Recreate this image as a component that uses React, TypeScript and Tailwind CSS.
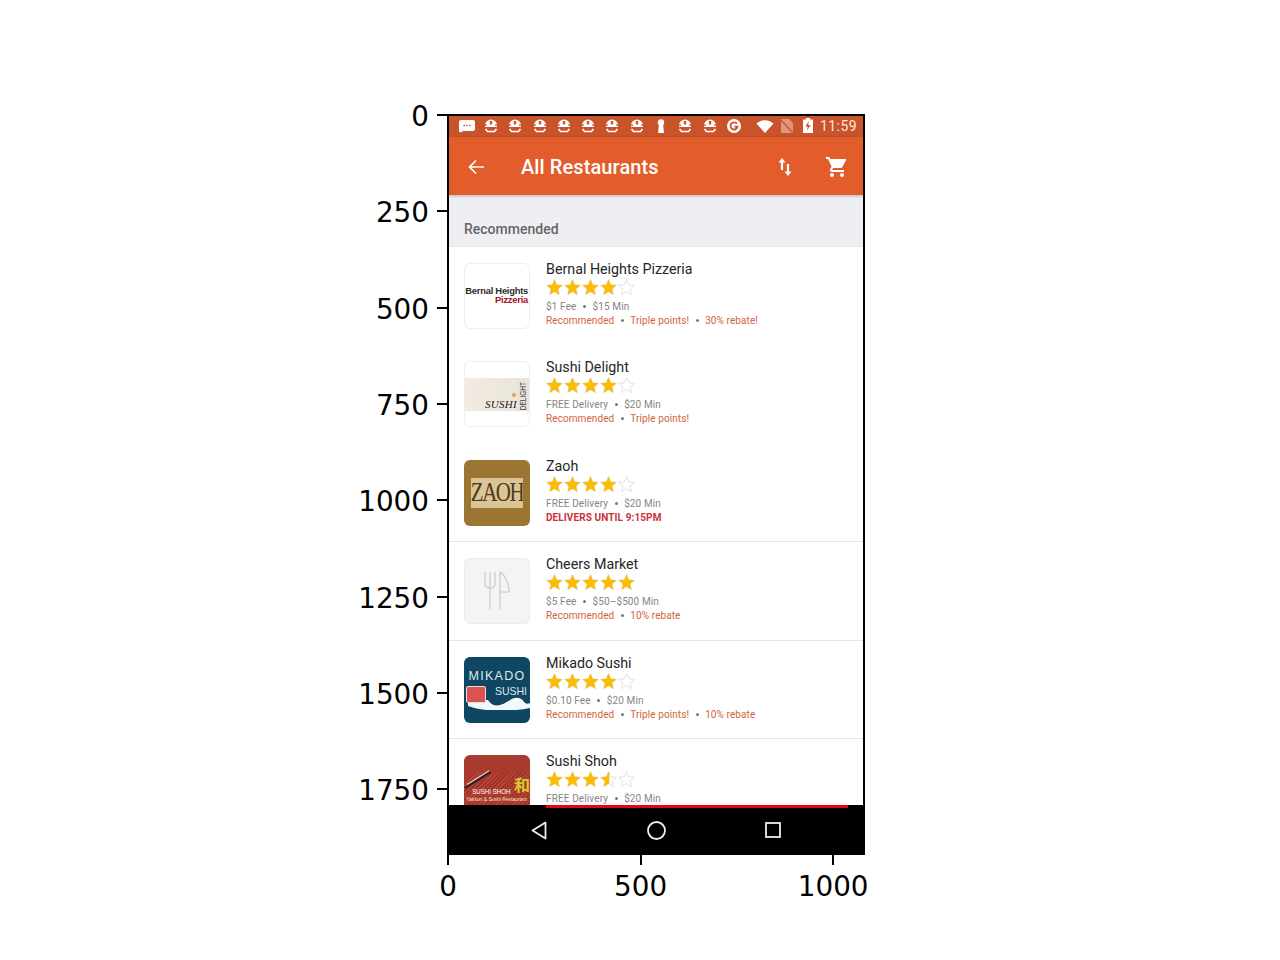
import type { ReactNode } from "react";

type Restaurant = {
  name: string;
  rating: number;
  info: string[];
  tags: string[];
  alert?: string;
  thumb: ReactNode;
  divider?: boolean;
};

const STAR = "M12 17.27L18.18 21l-1.64-7.03L22 9.24l-7.19-.61L12 2 9.19 8.63 2 9.24l5.46 4.73L5.82 21z";

function Star({ fill }: { fill: "full" | "half" | "none" }) {
  return (
    <svg width="19" height="19" viewBox="0 0 24 24" className="-mx-[0.5px] -mt-[1px] shrink-0">
      <path d={STAR} fill="none" stroke="#dcdcdc" strokeWidth="1.1" />
      {fill === "full" && <path d={STAR} fill="#fbbc05" />}
      {fill === "half" && <path d={STAR} fill="#fbbc05" style={{ clipPath: "inset(0 45% 0 0)" }} />}
    </svg>
  );
}

function Stars({ rating }: { rating: number }) {
  return (
    <div className="-ml-[0.5px] flex h-[18px]">
      {[1, 2, 3, 4, 5].map((n) => (
        <Star key={n} fill={rating >= n ? "full" : rating >= n - 0.5 ? "half" : "none"} />
      ))}
    </div>
  );
}

function BernalThumb() {
  return (
    <div className="flex h-full flex-col justify-center rounded-md border border-[#eeeeee] bg-white pr-[1px] pb-[2px] text-right font-['Liberation_Sans',sans-serif] text-[9.4px] leading-[9.5px] font-bold tracking-[-0.25px] whitespace-nowrap">
      <div className="text-[#2b2b2b]">Bernal Heights</div>
      <div className="text-[#a5121c]">Pizzeria</div>
    </div>
  );
}

function SushiDelightThumb() {
  return (
    <div className="flex h-full items-center overflow-hidden rounded-md border border-[#eeeeee] bg-white">
      <div className="relative flex h-[33px] w-full items-end justify-end bg-gradient-to-r from-[#f1ebe2] to-[#e9e4da]">
        <span className="mb-[1px] font-['Liberation_Serif',serif] text-[11px] leading-[12px] tracking-[0.3px] text-[#222222] italic">SUSHI</span>
        <span className="mb-[1px] ml-[2px] mr-[2px] scale-x-[1.5] rotate-180 font-['Liberation_Sans',sans-serif] text-[6.5px] leading-[8px] text-[#444444] [writing-mode:vertical-rl]">DELIGHT</span>
        <span className="absolute top-[15px] right-[13px] h-[4px] w-[4px] rounded-full bg-[#e8a04a]" />
      </div>
    </div>
  );
}

function ZaohThumb() {
  return (
    <div className="flex h-full items-center justify-center rounded-md bg-[#9b7633]">
      <div className="flex h-[30px] w-[52px] items-center justify-center overflow-hidden bg-[#d9c596] font-['Liberation_Serif',serif] text-[21px] leading-none tracking-[-1.5px] text-[#4f3a17]">
        <span className="scale-y-[1.25]">ZAOH</span>
      </div>
    </div>
  );
}

function CheersThumb() {
  return (
    <div className="flex h-full items-center justify-center rounded-md border border-[#ececec] bg-[#f4f4f4]">
      <svg width="26" height="38" viewBox="0 0 26 38" fill="none" stroke="#d4d4d4" strokeWidth="1.6" className="-mt-[2px]">
        <path d="M1 1v11c0 3 2 5 5 5s5-2 5-5V1M6 1v37" />
        <path d="M16 38V1c5 3 9 11 9 20h-9" />
      </svg>
    </div>
  );
}

function MikadoThumb() {
  return (
    <div className="relative flex h-full flex-col overflow-hidden rounded-md bg-[#0f4661] font-['Liberation_Sans',sans-serif] text-[#dbeaf0]">
      <svg width="66" height="24" viewBox="0 0 66 24" className="absolute bottom-[13px] left-0">
        <path d="M4 14H24C30 24 40 18 46 14C52 10 58 12 60 16C62 18 64 18 66 17V22C46 26 20 26 4 20z" fill="#f4f8fa" />
      </svg>
      <div className="relative mt-[12px] text-center text-[12.5px] leading-[14px] tracking-[1.3px]">MIKADO</div>
      <div className="relative mt-[2px] pr-[3px] text-right text-[10.5px] leading-[13px]">SUSHI</div>
      <div className="absolute top-[29px] left-[2px] h-[17px] w-[20px] rounded-[2px] border border-[#f2d9d6] bg-[#d9534f]" />
    </div>
  );
}

function ShohThumb() {
  return (
    <div className="relative flex h-full flex-col overflow-hidden rounded-t-md bg-[#a93a2e] font-['Liberation_Sans',sans-serif]">
      <div className="h-[17px] shrink-0" />
      <div className="h-[50px] bg-[repeating-linear-gradient(135deg,#b5483a_0px,#b5483a_1px,#a33528_1px,#a33528_3px)] pt-[15px]">
        <div className="origin-left scale-x-[0.82] pl-[10px] text-[7.5px] leading-[9px] text-white">SUSHI SHOH</div>
        <div className="pl-[2px] text-[5px] leading-[7px] text-[#f5e2c8]">Yakitori &amp; Sushi Restaurant</div>
      </div>
      <div className="absolute top-[32px] left-[1px] h-[2px] w-[30px] origin-left -rotate-[32deg] bg-[#222222]" />
      <div className="absolute top-[29px] left-[3px] h-[1px] w-[26px] origin-left -rotate-[32deg] bg-[#e5d5c5]" />
      <div className="absolute top-[20px] right-0 font-['Noto_Sans_CJK_JP',sans-serif] text-[16px] leading-[18px] font-bold text-[#d8c92e]">和</div>
    </div>
  );
}

const restaurants: Restaurant[] = [
  { name: "Bernal Heights Pizzeria", rating: 4, info: ["$1 Fee", "$15 Min"], tags: ["Recommended", "Triple points!", "30% rebate!"], thumb: <BernalThumb /> },
  { name: "Sushi Delight", rating: 4, info: ["FREE Delivery", "$20 Min"], tags: ["Recommended", "Triple points!"], thumb: <SushiDelightThumb /> },
  { name: "Zaoh", rating: 4, info: ["FREE Delivery", "$20 Min"], tags: [], alert: "DELIVERS UNTIL 9:15PM", thumb: <ZaohThumb />, divider: true },
  { name: "Cheers Market", rating: 5, info: ["$5 Fee", "$50–$500 Min"], tags: ["Recommended", "10% rebate"], thumb: <CheersThumb />, divider: true },
  { name: "Mikado Sushi", rating: 4, info: ["$0.10 Fee", "$20 Min"], tags: ["Recommended", "Triple points!", "10% rebate"], thumb: <MikadoThumb />, divider: true },
  { name: "Sushi Shoh", rating: 3.5, info: ["FREE Delivery", "$20 Min"], tags: [], thumb: <ShohThumb /> },
];

function Dotted({ items, className }: { items: string[]; className: string }) {
  return (
    <div className={`flex items-center whitespace-nowrap ${className}`}>
      {items.map((item, i) => (
        <span key={item} className="flex items-center">
          {i > 0 && <span className="mx-[6.5px] h-[3px] w-[3px] rounded-full bg-[#777777]" />}
          {item}
        </span>
      ))}
    </div>
  );
}

function Row({ r }: { r: Restaurant }) {
  return (
    <div className={`flex h-[98.4px] shrink-0 gap-4 px-[15px] pt-4 ${r.divider ? "border-b border-[#e6e6e6]" : ""}`}>
      <div className="h-[66px] w-[66px] shrink-0">{r.thumb}</div>
      <div className="flex min-w-0 flex-col">
        <div className="-mt-[2px] text-[14.25px] leading-[17px] text-[#262626]">{r.name}</div>
        <div className="mt-[1px]"><Stars rating={r.rating} /></div>
        <Dotted items={r.info} className="mt-[3px] h-[13px] text-[10px] tracking-[0.12px] text-[#858585]" />
        {r.alert ? (
          <div className="mt-[1px] text-[10px] leading-[13px] font-bold tracking-[0.1px] text-[#c8323c]">{r.alert}</div>
        ) : (
          <Dotted items={r.tags} className="mt-[1px] h-[13px] text-[10px] tracking-[0.09px] text-[#d1643c]" />
        )}
      </div>
    </div>
  );
}

function NotifIcon() {
  return (
    <svg width="16" height="16" viewBox="0 0 16 16" className="shrink-0">
      <path d="M8 1.500a6 6 0 0 1 6 6v1.500H2V7.500a6 6 0 0 1 6-6z" fill="#fff" />
      <rect x="6.800" y="3" width="2.400" height="3.500" fill="#c9532b" />
      <rect x="0" y="6.500" width="4" height="1.200" fill="#c9532b" />
      <rect x="12" y="6.500" width="4" height="1.200" fill="#c9532b" />
      <path d="M2.500 11l2 2.500h7l2-2.500" fill="none" stroke="#fff" strokeWidth="1.600" />
    </svg>
  );
}

function StatusBar() {
  return (
    <div className="flex h-[21px] shrink-0 items-center bg-[#c9532b] pr-[7px] pb-[2px] pl-[9px] text-white">
      <svg width="18" height="14" viewBox="0 0 18 14" className="mr-[7px] shrink-0">
        <path d="M3 1h12a2 2 0 0 1 2 2v7a2 2 0 0 1-2 2H5l-2 1.500A2 2 0 0 1 1 11V3a2 2 0 0 1 2-2z" fill="#fff" />
        <path d="M5.500 6.500h1.400M8.300 6.500h1.400M11.100 6.500h1.400" stroke="#c9532b" strokeWidth="1.400" />
      </svg>
      <div className="flex gap-[8.3px]">
        {[0, 1, 2, 3, 4, 5, 6].map((n) => <NotifIcon key={n} />)}
        <svg width="16" height="16" viewBox="0 0 16 16" className="shrink-0">
          <circle cx="8" cy="4.500" r="3.200" fill="#fff" />
          <path d="M6 6h4l1 9H5z" fill="#fff" />
        </svg>
        <NotifIcon />
        <NotifIcon />
        <svg width="16" height="16" viewBox="0 0 16 16" className="shrink-0">
          <circle cx="8" cy="8" r="7" fill="#fff" />
          <path d="M11 5.800A3.600 3.600 0 1 0 11.600 8.600H8.400" fill="none" stroke="#c9532b" strokeWidth="1.800" />
        </svg>
      </div>
      <svg width="18" height="14" viewBox="0 0 18 14" className="ml-[14px] shrink-0">
        <path d="M0.500 4.500C5.500 0 12.500 0 17.500 4.500L9 14z" fill="#fff" />
      </svg>
      <svg width="12" height="14" viewBox="0 0 12 14" className="ml-[7px] shrink-0">
        <path d="M0 14V0h8l4 4v10z" fill="#fff" fillOpacity="0.4" />
        <path d="M0 1l12 13" stroke="#c9532b" strokeWidth="1.200" />
      </svg>
      <svg width="10" height="15" viewBox="0 0 10 15" className="ml-[10px] shrink-0">
        <path d="M3 0h4v1.500h3V15H0V1.500h3z" fill="#fff" />
        <path d="M5.800 3L2.500 8.500h2.200L4 12.500l3.500-5.500H5.200z" fill="#c9532b" />
      </svg>
      <span className="ml-[7px] text-[14px] leading-none tracking-[0.45px] text-[#fbe6dc]">11:59</span>
    </div>
  );
}

function AppBar() {
  return (
    <div className="relative z-10 flex h-[58px] shrink-0 items-center bg-[#e25d2b] pt-[2px] pr-[14px] pl-[19px] text-white shadow-[0_1px_3px_rgba(0,0,0,0.25)]">
      <svg width="16" height="16" viewBox="0 0 16 16" fill="none" stroke="#fff" strokeWidth="1.700" className="shrink-0">
        <path d="M16 8H1.500M8 1.500L1.500 8 8 14.500" />
      </svg>
      <div className="ml-[37px] flex-1 text-[20px] leading-none font-medium tracking-[0.1px]">All Restaurants</div>
      <svg width="14" height="18" viewBox="0 0 14 18" fill="#fff" className="mr-[33px] shrink-0">
        <path d="M4 0L.5 4.500h2.400V12h2.200V4.500h2.400z" />
        <path d="M10 18l3.500-4.500h-2.400V6H8.900v7.500H6.500z" />
      </svg>
      <svg width="24" height="24" viewBox="0 0 24 24" fill="#fff" className="shrink-0">
        <path d="M7 18c-1.100 0-1.990.900-1.990 2S5.900 22 7 22s2-.900 2-2-.900-2-2-2zM1 2v2h2l3.600 7.590-1.350 2.450c-.160.280-.250.610-.250.960 0 1.100.900 2 2 2h12v-2H7.420c-.140 0-.250-.110-.250-.250l.030-.120.900-1.630h7.450c.750 0 1.410-.410 1.750-1.030l3.580-6.490A1 1 0 0 0 20 4H5.210l-.940-2H1zm16 16c-1.100 0-1.990.900-1.990 2s.890 2 1.990 2 2-.900 2-2-.900-2-2-2z" />
      </svg>
    </div>
  );
}

function NavBar() {
  return (
    <div className="relative flex h-[48px] shrink-0 bg-black">
      <div className="absolute top-0 right-[15px] left-[97px] h-[3px] bg-[#e30613]" />
      <div className="flex w-full items-center pt-[2px] pl-[82px]">
        <svg width="16" height="19" viewBox="0 0 16 19" fill="none" stroke="#eeeeee" strokeWidth="1.800" className="shrink-0">
          <path d="M14.500 1.500v16L1.500 9.500z" strokeLinejoin="round" />
        </svg>
        <svg width="19" height="19" viewBox="0 0 19 19" fill="none" stroke="#eeeeee" strokeWidth="1.800" className="ml-[100px] shrink-0">
          <circle cx="9.500" cy="9.500" r="8.500" />
        </svg>
        <svg width="16" height="16" viewBox="0 0 16 16" fill="none" stroke="#eeeeee" strokeWidth="1.800" className="ml-[99px] shrink-0">
          <rect x="1" y="1" width="14" height="14" />
        </svg>
      </div>
    </div>
  );
}

const Y_TICKS = [0, 250, 500, 750, 1000, 1250, 1500, 1750];
const X_TICKS = [0, 500, 1000];
const SCALE = 0.3852;

export default function App() {
  return (
    <div className="relative h-[960px] w-[1280px] overflow-hidden bg-white pt-[114px] pl-[447px] font-['Roboto',sans-serif]">
      <div className="relative h-[741px] w-[418px]">
        {Y_TICKS.map((t) => (
          <div
            key={t}
            className="absolute right-full flex h-[34px] items-center gap-[8px] font-['DejaVu_Sans',sans-serif] text-[27.8px] text-black"
            style={{ top: 1 + t * SCALE - 17 }}
          >
            <span className="mt-[4px]">{t}</span>
            <span className="h-[2px] w-[10px] bg-black" />
          </div>
        ))}
        {X_TICKS.map((t) => (
          <div
            key={t}
            className="absolute top-full flex w-[80px] -translate-x-1/2 flex-col items-center font-['DejaVu_Sans',sans-serif] text-[27.8px] leading-[34px] text-black"
            style={{ left: 1 + t * SCALE }}
          >
            <span className="h-[10px] w-[2px] bg-black" />
            <span className="mt-[5px]">{t}</span>
          </div>
        ))}
        <div className="flex h-full w-full flex-col overflow-hidden border-2 border-black">
          <StatusBar />
          <AppBar />
          <div className="flex min-h-0 flex-1 flex-col overflow-hidden bg-white">
            <div className="flex h-[52px] shrink-0 items-end border-b border-[#e6e6e6] bg-[#eeeef3] px-[15px] pb-[8px] text-[14px] leading-[17px] font-medium text-[#666666]">
              Recommended
            </div>
            {restaurants.map((r) => <Row key={r.name} r={r} />)}
          </div>
          <NavBar />
        </div>
      </div>
    </div>
  );
}
